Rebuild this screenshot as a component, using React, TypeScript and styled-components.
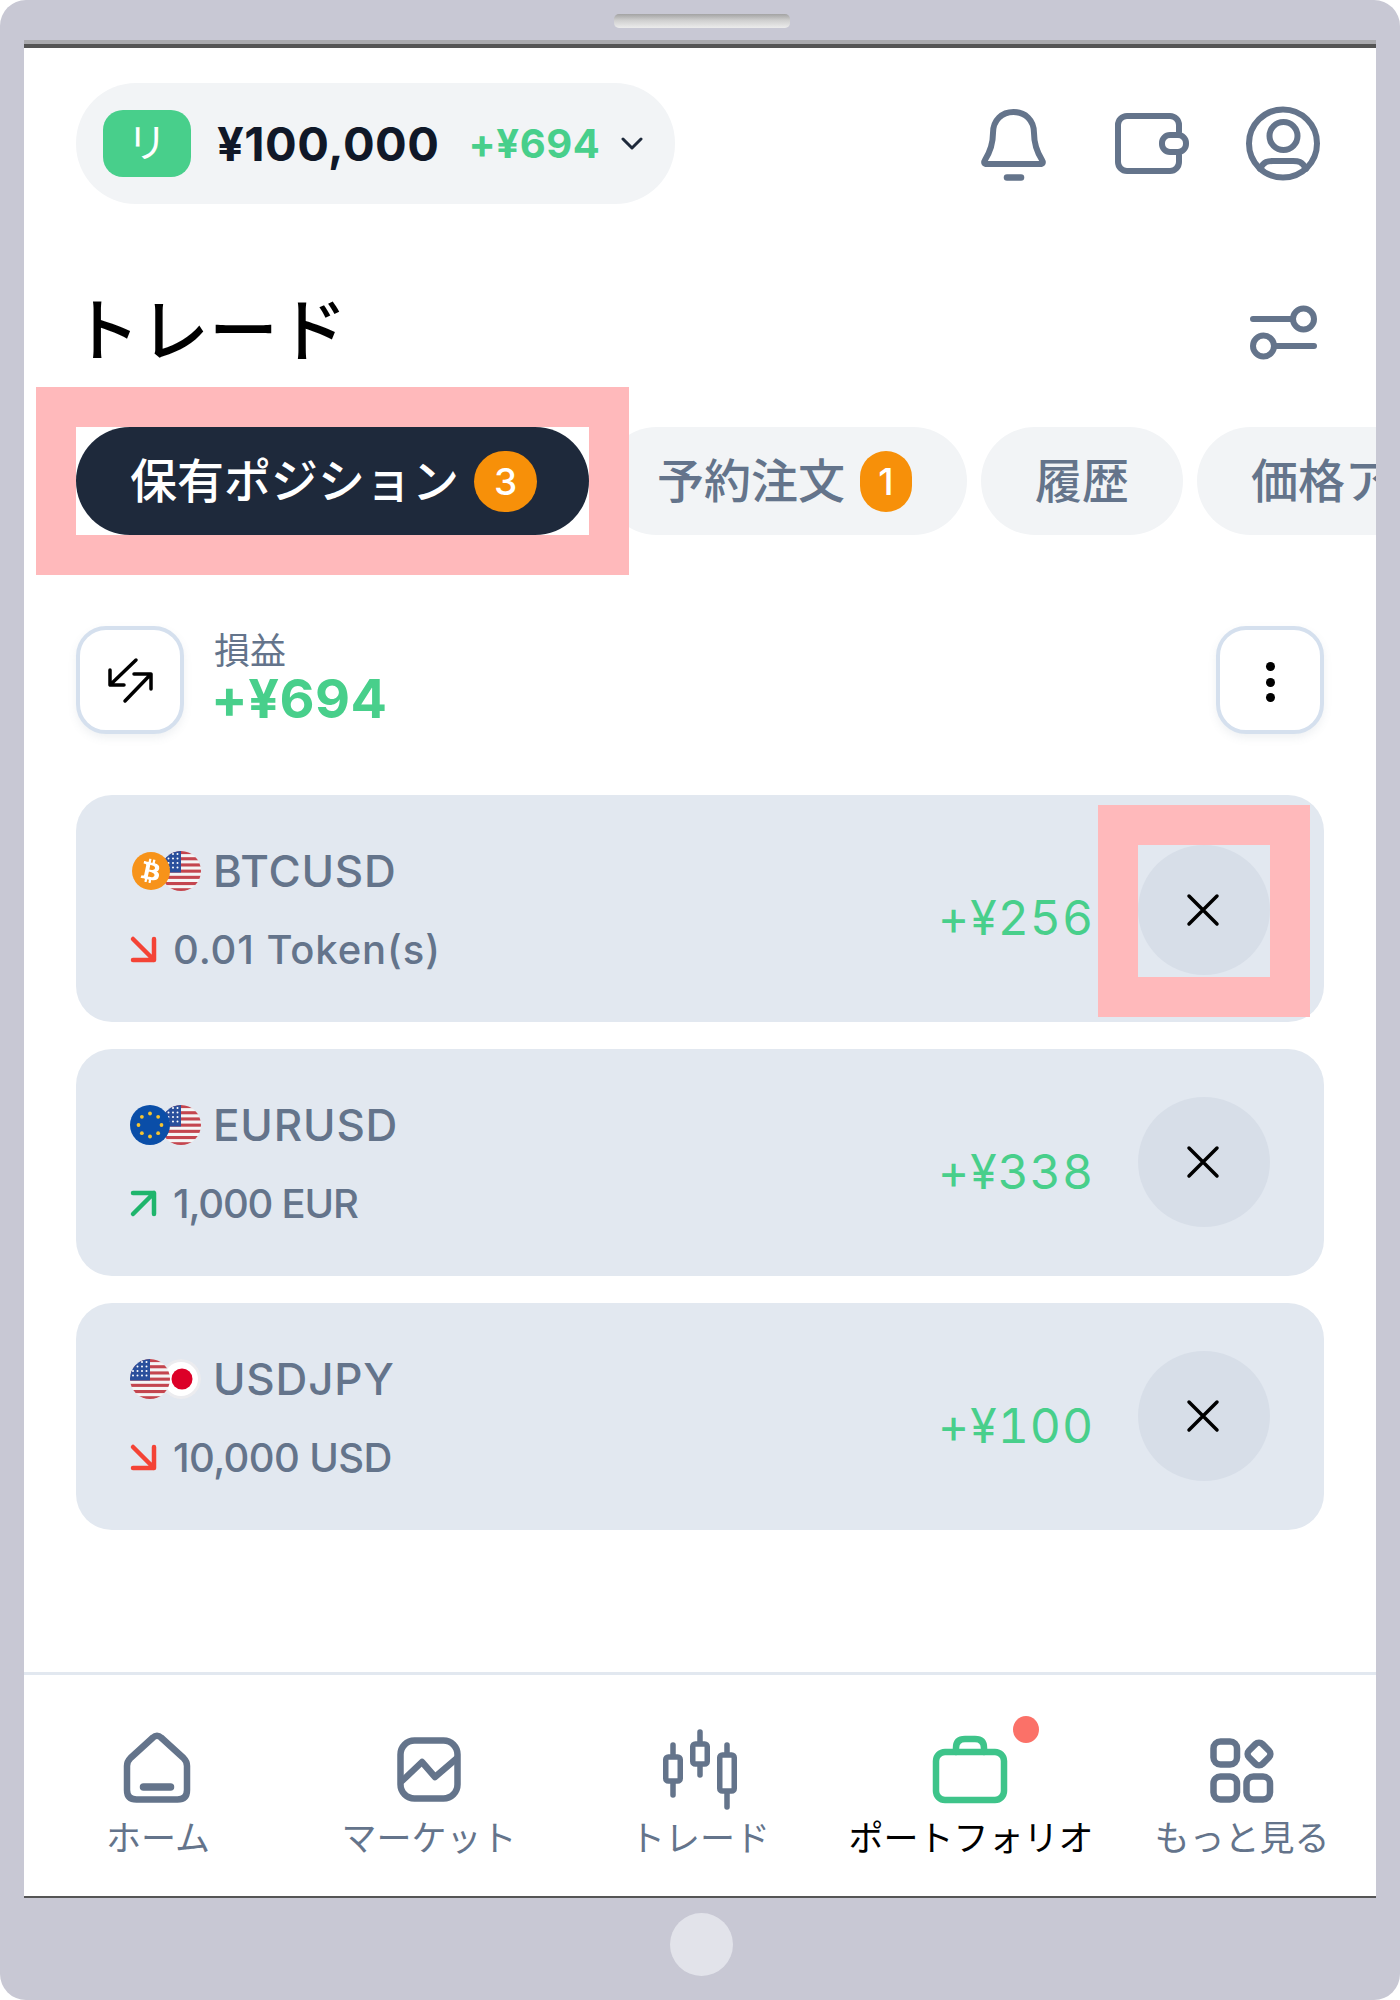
import React from "react";
import styled, { createGlobalStyle } from "styled-components";
import { FaBtc } from "react-icons/fa";

const slate = "#64748b";
const green = "#48cf8b";

const Global = createGlobalStyle`
  html, body { margin: 0; padding: 0; background: #fff; }
  * { box-sizing: border-box; }
  body { font-family: Inter, "Noto Sans CJK JP", sans-serif; }
`;

const Device = styled.div`
  width: 1400px; height: 2000px; background: #c8c8d4; border-radius: 26px;
  display: flex; flex-direction: column; overflow: hidden;
`;
const TopBezel = styled.div`
  height: 40px; flex: none; display: flex; justify-content: center; padding: 14px 0 0 3px;
`;
const Speaker = styled.div`
  width: 176px; height: 14px; border-radius: 5px;
  background: linear-gradient(#a3a3a3, #cfcfcf 45%, #ececec);
`;
const Screen = styled.main`
  flex: 1; min-height: 0; margin: 0 24px; background: #fff; overflow: hidden;
  display: flex; flex-direction: column;
  border-top: 4px solid #aaaaae; border-bottom: 2px solid #555;
  position: relative;
  &::before { content: ""; display: block; height: 4px; flex: none; background: #555; }
`;
const BottomBezel = styled.div`
  height: 102px; flex: none; display: flex; justify-content: center; padding: 15px 0 0 3px;
`;
const HomeButton = styled.div`
  width: 63px; height: 63px; border-radius: 50%; background: #e2e3ea;
`;

const Header = styled.header`
  display: flex; align-items: center; justify-content: space-between;
  margin-top: 35px; padding: 0 56px 0 52px; flex: none;
`;
const BalancePill = styled.div`
  height: 121px; width: 599px; border-radius: 60px; background: #f2f4f6;
  display: flex; align-items: center; padding-left: 27px;
`;
const AccountBadge = styled.div`
  width: 88px; height: 67px; border-radius: 20px; background: ${green}; color: #fff;
  display: flex; align-items: center; justify-content: center; padding-bottom: 7px;
  font: 400 40px/1 "Noto Sans CJK JP", sans-serif;
`;
const Balance = styled.span`
  margin-left: 26px; font-size: 47px; font-weight: 700; color: #101828; letter-spacing: 0.5px;
`;
const BalanceGain = styled.span`
  margin-left: 29px; font-size: 40px; font-weight: 700; color: ${green}; letter-spacing: 0.6px;
`;
const Chevron = styled.svg`
  margin-left: 21px; width: 22px; height: 13px; fill: none; stroke: #1e293b; stroke-width: 3; stroke-linecap: round; stroke-linejoin: round;
`;
const HeaderIcons = styled.div`
  display: flex; align-items: center; gap: 57px;
`;
const Icon = styled.svg<{ $stroke?: string }>`
  display: block; flex: none; fill: none; stroke: ${(p) => p.$stroke || slate}; overflow: visible;
  stroke-width: 6; stroke-linecap: round; stroke-linejoin: round;
`;
const BellIcon = styled(Icon)`
  margin: 3px 11px 0 0;
`;
const FilterIcon = styled(Icon)`
  margin-top: 8px;
`;

const TitleRow = styled.div`
  display: flex; align-items: center; justify-content: space-between;
  margin-top: 84px; padding: 0 59px 0 47px; height: 80px; flex: none;
`;
const Title = styled.h1`
  margin: 0 0 4px; font: 500 69px/80px "Noto Sans CJK JP", sans-serif; color: #000;
`;

const Tabs = styled.nav`
  display: flex; gap: 14px; margin-top: 59px; padding-left: 52px; flex: none;
`;
const TabMark = styled.div`
  flex: none; position: relative; z-index: 1; outline: 40px solid #ffb9bb;
`;
const Tab = styled.div<{ $active?: boolean; $end?: number }>`
  flex: none; height: 108px; border-radius: 54px;
  display: flex; align-items: center; gap: 15px;
  padding: 0 ${(p) => p.$end ?? 54}px 0 54px;
  background: ${(p) => (p.$active ? "#1e293b" : "#f2f4f6")};
  color: ${(p) => (p.$active ? "#fff" : slate)};
  font: 500 47px/1 "Noto Sans CJK JP", sans-serif;
`;
const TabLabel = styled.span`
  padding-bottom: 8px;
`;
const TabCount = styled.span<{ $w: number }>`
  width: ${(p) => p.$w}px; height: 61px; border-radius: 31px; background: #f79009; color: #fff;
  display: flex; align-items: center; justify-content: center;
  font: 500 37px/1 Inter, sans-serif;
`;

const PnlRow = styled.section`
  display: flex; align-items: center; margin-top: 91px; padding: 0 52px; flex: none; height: 108px;
`;
const SquareButton = styled.div`
  width: 108px; height: 108px; border-radius: 30px; background: #fff; flex: none;
  border: 4px solid #d5e0ee; box-shadow: 0 4px 8px rgba(100, 116, 139, 0.1);
  display: flex; align-items: center; justify-content: center;
`;
const PnlText = styled.div`
  display: flex; flex-direction: column; margin: 0 0 9px 30px; flex: 1;
`;
const PnlLabel = styled.span`
  font: 400 36px/40px "Noto Sans CJK JP", sans-serif; color: ${slate};
`;
const PnlValue = styled.span`
  font-size: 54px; line-height: 50px; font-weight: 700; color: ${green};
  margin: 6px 0 0 -3px; letter-spacing: 0.5px;
`;
const Kebab = styled.span`
  width: 9px; height: 9px; border-radius: 50%; background: #000; display: block; margin-top: 5px;
  box-shadow: 0 -16px 0 #000, 0 15px 0 #000;
`;

const Cards = styled.section`
  display: flex; flex-direction: column; gap: 27px; margin-top: 61px; padding: 0 52px; flex: none;
`;
const Card = styled.article`
  height: 227px; border-radius: 36px; background: #e2e8f0;
  display: flex; align-items: center; padding: 0 54px;
`;
const CardInfo = styled.div`
  flex: 1; display: flex; flex-direction: column; gap: 32px; margin-top: 3px;
`;
const NameRow = styled.div`
  display: flex; align-items: center; height: 46px;
`;
const Flags = styled.div`
  display: flex; margin-right: 12px;
  & > :first-child { position: relative; z-index: 1; }
  & > :last-child { margin-left: -9px; }
`;
const Flag = styled.svg`
  width: 40px; height: 40px; display: block; border-radius: 50%; flex: none;
`;
const CoinFlag = styled.div`
  width: 38px; height: 38px; margin: 1px 0 1px 2px; border-radius: 50%; background: #f7931a; color: #fff;
  display: flex; align-items: center; justify-content: center; font-size: 24px;
  & > svg { transform: rotate(12deg); }
`;
const Symbol = styled.span`
  font-size: 44px; line-height: 46px; font-weight: 500; color: ${slate}; letter-spacing: 0.8px;
`;
const SizeRow = styled.div<{ $track: number }>`
  display: flex; align-items: center; height: 46px; gap: 16px;
  font-size: 40px; font-weight: 500; color: ${slate}; letter-spacing: ${(p) => p.$track}px;
`;
const Amount = styled.span`
  font-size: 48px; line-height: 1; font-weight: 400; color: ${green}; margin-top: 18px;
  letter-spacing: 1px; font-variant-numeric: tabular-nums;
`;
const CloseWrap = styled.div<{ $mark?: boolean }>`
  width: 132px; height: 132px; margin-left: 44px; flex: none; position: relative; z-index: 1;
  outline: ${(p) => (p.$mark ? "40px solid #ffb9bb" : "none")};
  margin-top: ${(p) => (p.$mark ? "5px" : "0")};
`;
const CloseButton = styled.div`
  width: 132px; height: 130px; border-radius: 50%; background: #d7dee8; padding-right: 2px;
  display: flex; align-items: center; justify-content: center;
`;

const BottomNav = styled.nav`
  margin-top: auto; flex: none; height: 224px; border-top: 3px solid #e2e8f0; padding-top: 54px;
  display: grid; grid-template-columns: repeat(5, 271px); justify-content: center;
`;
const NavItem = styled.div<{ $active?: boolean }>`
  display: flex; flex-direction: column; align-items: center;
  color: ${(p) => (p.$active ? "#000" : slate)};
  font: 400 35px/40px "Noto Sans CJK JP", sans-serif; white-space: nowrap;
`;
const NavIconBox = styled.div`
  height: 81px; display: flex; align-items: center; justify-content: center; margin-bottom: 6px; position: relative;
`;
const NavDot = styled.span`
  position: absolute; left: 79px; top: -13px; width: 26px; height: 27px; border-radius: 50%; background: #fb7168;
`;

const UsFlag = () => (
  <Flag viewBox="0 0 40 40">
    <rect width="40" height="40" fill="#f5f5f5" />
    {[0, 6.2, 12.4, 18.6, 24.8, 31, 37.2].map((y) => (
      <rect key={y} y={y} width="40" height="3.1" fill="#c4464f" />
    ))}
    <rect width="20" height="21.5" fill="#2a4f9c" />
    {[3, 7.5, 12, 16.5].flatMap((x) =>
      [3, 7.5, 12, 16.5].map((y) => <circle key={`${x}-${y}`} cx={x} cy={y} r="1" fill="#fff" />)
    )}
  </Flag>
);
const EuFlag = () => (
  <Flag viewBox="0 0 40 40">
    <rect width="40" height="40" fill="#0a4ea8" />
    {Array.from({ length: 8 }).map((_, i) => {
      const a = (i * Math.PI) / 4;
      return <circle key={i} cx={20 + 11.5 * Math.sin(a)} cy={20 - 11.5 * Math.cos(a)} r="1.9" fill="#f5c431" />;
    })}
  </Flag>
);
const JpFlag = () => (
  <Flag viewBox="0 0 40 40">
    <circle cx="20" cy="20" r="20" fill="#ececef" />
    <circle cx="20" cy="20" r="17" fill="#fff" />
    <circle cx="21" cy="20" r="10.5" fill="#dc0028" />
  </Flag>
);
const Btc = () => (
  <CoinFlag>
    <FaBtc />
  </CoinFlag>
);

const Trend = ({ up }: { up: boolean }) => (
  <Icon width="27" height="27" viewBox="0 0 27 27" $stroke={up ? "#1fb56c" : "#f44336"} style={{ strokeWidth: 4.5 }}>
    {up ? <path d="M3 24 24 3M3 3H24V24" /> : <path d="M3 3 24 24M24 3V24H3" />}
  </Icon>
);

const positions = [
  { flags: [<Btc key="a" />, <UsFlag key="b" />], name: "BTCUSD", size: "0.01 Token(s)", track: 0.9, up: false, pnl: "+¥256", mark: true },
  { flags: [<EuFlag key="a" />, <UsFlag key="b" />], name: "EURUSD", size: "1,000 EUR", track: -1.2, up: true, pnl: "+¥338" },
  { flags: [<UsFlag key="a" />, <JpFlag key="b" />], name: "USDJPY", size: "10,000 USD", track: -0.6, up: false, pnl: "+¥100" },
];

export default function App() {
  return (
    <>
      <Global />
      <Device>
        <TopBezel>
          <Speaker />
        </TopBezel>
        <Screen>
          <Header>
            <BalancePill>
              <AccountBadge>リ</AccountBadge>
              <Balance>¥100,000</Balance>
              <BalanceGain>+¥694</BalanceGain>
              <Chevron viewBox="0 0 22 13">
                <path d="M2 2 11 11 20 2" />
              </Chevron>
            </BalancePill>
            <HeaderIcons>
              <BellIcon width="67" height="72" viewBox="0 0 67 72">
                <path d="M13 24C13 11 22 3 33.5 3S54 11 54 24C54 36 57 43 62 51 63.5 53.5 63 55 60 55H7C4 55 3.500 53.500 5 51 10 43 13 36 13 24Z" />
                <path d="M27 68.500H41" strokeWidth="6.500" />
              </BellIcon>
              <Icon width="74" height="61" viewBox="0 0 74 61">
                <path d="M64 19V12A9 9 0 0 0 55 3H12A9 9 0 0 0 3 12V49A9 9 0 0 0 12 58H55A9 9 0 0 0 64 49V42" />
                <rect x="47" y="22" width="24" height="17" rx="8" />
              </Icon>
              <Icon width="74" height="75" viewBox="0 0 74 75">
                <circle cx="37" cy="37.500" r="34" />
                <circle cx="37.500" cy="30" r="14" />
                <path d="M14 63C18 55 22 55 27 55H47C52 55 56 55 60 63" />
              </Icon>
            </HeaderIcons>
          </Header>
          <TitleRow>
            <Title>トレード</Title>
            <FilterIcon width="67" height="54" viewBox="0 0 67 54">
              <path d="M3 14H43M24 41H64" />
              <circle cx="53.500" cy="14" r="10.500" />
              <circle cx="13.500" cy="41" r="10.500" />
            </FilterIcon>
          </TitleRow>
          <Tabs>
            <TabMark>
              <Tab $active $end={52}>
                <TabLabel>保有ポジション</TabLabel>
                <TabCount $w={63}>3</TabCount>
              </Tab>
            </TabMark>
            <Tab $end={55}>
              <TabLabel>予約注文</TabLabel>
              <TabCount $w={52}>1</TabCount>
            </Tab>
            <Tab>
              <TabLabel>履歴</TabLabel>
            </Tab>
            <Tab>
              <TabLabel>価格アラート</TabLabel>
            </Tab>
          </Tabs>
          <PnlRow>
            <SquareButton>
              <Icon width="46" height="45" viewBox="0 0 46 45" $stroke="#000" style={{ strokeWidth: 3.5 }}>
                <path d="M29 2 3 27M3 12V27H17M18 43 44 16M27 16H44V31" />
              </Icon>
            </SquareButton>
            <PnlText>
              <PnlLabel>損益</PnlLabel>
              <PnlValue>+¥694</PnlValue>
            </PnlText>
            <SquareButton>
              <Kebab />
            </SquareButton>
          </PnlRow>
          <Cards>
            {positions.map((p) => (
              <Card key={p.name}>
                <CardInfo>
                  <NameRow>
                    <Flags>{p.flags}</Flags>
                    <Symbol>{p.name}</Symbol>
                  </NameRow>
                  <SizeRow $track={p.track}>
                    <Trend up={p.up} />
                    {p.size}
                  </SizeRow>
                </CardInfo>
                <Amount>{p.pnl}</Amount>
                <CloseWrap $mark={p.mark}>
                  <CloseButton>
                    <Icon width="32" height="32" viewBox="0 0 32 32" $stroke="#000" style={{ strokeWidth: 3.5 }}>
                      <path d="M2 2 30 30M30 2 2 30" />
                    </Icon>
                  </CloseButton>
                </CloseWrap>
              </Card>
            ))}
          </Cards>
          <BottomNav>
            <NavItem>
              <NavIconBox>
                <Icon width="67" height="71" viewBox="1.500 2 67 71" style={{ strokeWidth: 6.5 }}>
                  <path d="M29.500 5.500C32 3 35 3 37.500 5.500L60 26Q63.500 29.500 63.500 34V58Q63.500 67.500 54 67.500H13Q3.500 67.500 3.500 58V34Q3.500 29.500 7 26Z" />
                  <path d="M20 55H47" strokeWidth="7.500" />
                </Icon>
              </NavIconBox>
              ホーム
            </NavItem>
            <NavItem>
              <NavIconBox>
                <Icon width="64" height="65" viewBox="0 0 64 65" style={{ strokeWidth: 6.5 }}>
                  <rect x="3.500" y="3.500" width="57" height="58" rx="14" />
                  <path d="M5 44 25 25 38 40 59 22" />
                </Icon>
              </NavIconBox>
              マーケット
            </NavItem>
            <NavItem>
              <NavIconBox>
                <Icon width="74" height="81" viewBox="0 0 74 81" style={{ strokeWidth: 5.5 }}>
                  <rect x="2.750" y="28" width="14.500" height="24" rx="2.500" />
                  <path d="M10 16V27M10 53V66" />
                  <rect x="29.750" y="15" width="14.500" height="20" rx="2.500" />
                  <path d="M37 3V14M37 36V46" />
                  <rect x="56.750" y="26" width="14.500" height="36" rx="2.500" />
                  <path d="M64 16V25M64 63V78" />
                </Icon>
              </NavIconBox>
              トレード
            </NavItem>
            <NavItem $active>
              <NavIconBox>
                <Icon width="74" height="67" viewBox="1 0 74 67" $stroke="#3ec48a" style={{ strokeWidth: 6.5 }}>
                  <rect x="3" y="16" width="68" height="48" rx="9" />
                  <path d="M23 16V12Q23 3 32 3H42Q51 3 51 12V16" />
                </Icon>
                <NavDot />
              </NavIconBox>
              ポートフォリオ
            </NavItem>
            <NavItem>
              <NavIconBox>
                <Icon width="65" height="66" viewBox="0 0 65 66" style={{ strokeWidth: 6.5 }}>
                  <rect x="3.500" y="4.500" width="23.500" height="23" rx="7" />
                  <rect x="3.500" y="39.500" width="23.500" height="23" rx="7" />
                  <rect x="36.500" y="39.500" width="23.500" height="23" rx="7" />
                  <rect x="39.500" y="7.500" width="19" height="19" rx="5" transform="rotate(45 49 17)" />
                </Icon>
              </NavIconBox>
              もっと見る
            </NavItem>
          </BottomNav>
        </Screen>
        <BottomBezel>
          <HomeButton />
        </BottomBezel>
      </Device>
    </>
  );
}
